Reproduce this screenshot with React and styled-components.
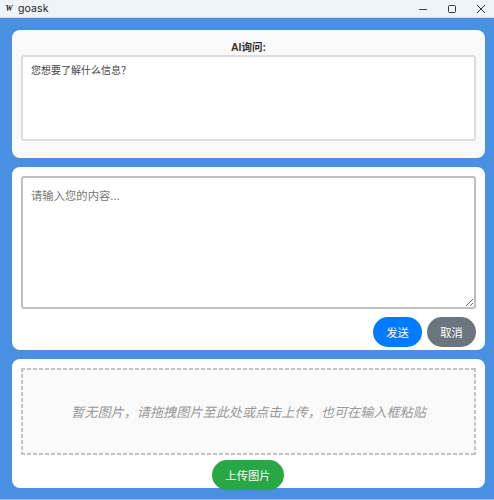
import styled, { createGlobalStyle } from "styled-components";

const GlobalStyle = createGlobalStyle`
  html, body {
    margin: 0;
    padding: 0;
    height: 100%;
  }
  body {
    background: #4a90e2;
    font-family: "Liberation Sans", "Noto Sans CJK SC", sans-serif;
    overflow: hidden;
  }
`;

const Window = styled.div`
  width: 494px;
  height: 500px;
  box-sizing: border-box;
  display: flex;
  flex-direction: column;
  background: #4a90e2;
  border-bottom: 1px solid #9fb4cc;
`;

const TitleBar = styled.div`
  height: 18px;
  box-sizing: border-box;
  flex: none;
  display: flex;
  align-items: center;
  background: #eff4f9;
  border-bottom: 1px solid #c9d6e6;
  color: #222;
  font-family: "Inter", "Noto Sans", sans-serif;
  font-size: 10.5px;
`;

const AppIcon = styled.span`
  width: 18px;
  text-align: center;
  font-family: "Liberation Serif", serif;
  font-size: 8px;
  font-weight: 700;
  font-style: italic;
  color: #111;
`;

const AppName = styled.span`
  flex: 1;
  letter-spacing: 0.1px;
`;

const WinButtons = styled.div`
  display: flex;
  margin-right: -1px;
`;

const WinButton = styled.span`
  width: 29px;
  height: 17px;
  display: flex;
  align-items: center;
  justify-content: center;
  svg {
    display: block;
  }
`;

const Main = styled.div`
  flex: 1;
  display: flex;
  flex-direction: column;
  gap: 9px;
  padding: 12px 9px 0 12px;
`;

const Card = styled.section`
  height: ${(p) => p.$height}px;
  box-sizing: border-box;
  padding: 9px;
  display: flex;
  flex-direction: column;
  background: ${(p) => p.$bg || "#fff"};
  border-radius: 8px;
`;

const Label = styled.div`
  height: 16px;
  line-height: 16px;
  text-align: center;
  font-size: 10.5px;
  font-weight: 700;
  color: #333;
`;

const Area = styled.textarea`
  display: block;
  flex: none;
  width: 100%;
  box-sizing: border-box;
  height: ${(p) => p.$height}px;
  margin: 0;
  padding: 8px;
  background: #fff;
  border: 2px solid ${(p) => p.$border};
  border-radius: 3px;
  font-family: "Noto Sans CJK SC", sans-serif;
  font-size: ${(p) => p.$font}px;
  line-height: ${(p) => p.$line}px;
  color: #444;
  outline: none;
  resize: ${(p) => p.$resize};
  &::placeholder {
    color: #777;
    opacity: 1;
  }
`;

const Actions = styled.div`
  display: flex;
  flex: none;
  justify-content: ${(p) => p.$justify};
  gap: 5px;
  margin-top: ${(p) => p.$top}px;
  padding-right: ${(p) => p.$inset || 0}px;
`;

const Pill = styled.button`
  width: ${(p) => p.$width}px;
  height: 30px;
  padding: 0;
  border: none;
  border-radius: 15px;
  background: ${(p) => p.$bg};
  color: #fff;
  font-family: "Noto Sans CJK SC", sans-serif;
  font-size: 11.33px;
  cursor: pointer;
`;

const dashX = "repeating-linear-gradient(90deg, #c4c4c4 0 4px, transparent 4px 6px)";
const dashY = "repeating-linear-gradient(180deg, #c4c4c4 0 4px, transparent 4px 6px)";

const DropZone = styled.div`
  height: 87px;
  flex: none;
  box-sizing: border-box;
  display: flex;
  align-items: center;
  justify-content: center;
  background-color: #fafafa;
  background-image: ${dashX}, ${dashX}, ${dashY}, ${dashY};
  background-size: 100% 2px, 100% 2px, 2px 100%, 2px 100%;
  background-position: 0 0, 0 100%, 0 0, 100% 0;
  background-repeat: no-repeat;
  color: #999;
  font-family: "Noto Sans CJK SC", sans-serif;
  font-size: 13.15px;
  font-style: italic;
`;

const App = () => {
  return (
    <Window>
      <GlobalStyle />
      <TitleBar>
        <AppIcon>W</AppIcon>
        <AppName>goask</AppName>
        <WinButtons>
          <WinButton>
            <svg width="10" height="10" viewBox="0 0 10 10">
              <path d="M1 5.5h8" stroke="#444" strokeWidth="1" />
            </svg>
          </WinButton>
          <WinButton>
            <svg width="10" height="10" viewBox="0 0 10 10">
              <rect x="1.5" y="1.5" width="7" height="7" rx="1" fill="none" stroke="#333" strokeWidth="1" />
            </svg>
          </WinButton>
          <WinButton>
            <svg width="10" height="10" viewBox="0 0 10 10">
              <path d="M1 1l8 8M9 1l-8 8" stroke="#333" strokeWidth="1" />
            </svg>
          </WinButton>
        </WinButtons>
      </TitleBar>
      <Main>
        <Card $height={128} $bg="#f9f9f9">
          <Label>AI询问:</Label>
          <Area
            $height={86}
            $border="#ddd"
            $resize="none"
            $font={10}
            $line={10}
            readOnly
            defaultValue="您想要了解什么信息？"
          />
        </Card>
        <Card $height={183}>
          <Area
            $height={133}
            $border="#bfbfbf"
            $resize="vertical"
            $font={11.33}
            $line={18}
            placeholder="请输入您的内容..."
          />
          <Actions $justify="flex-end" $top={8}>
            <Pill $width={49} $bg="#007bff">发送</Pill>
            <Pill $width={49} $bg="#6c757d">取消</Pill>
          </Actions>
        </Card>
        <Card $height={129}>
          <DropZone>暂无图片，请拖拽图片至此处或点击上传，也可在输入框粘贴</DropZone>
          <Actions $justify="center" $top={5} $inset={1}>
            <Pill $width={72} $bg="#28a745">上传图片</Pill>
          </Actions>
        </Card>
      </Main>
    </Window>
  );
};

export default App;
